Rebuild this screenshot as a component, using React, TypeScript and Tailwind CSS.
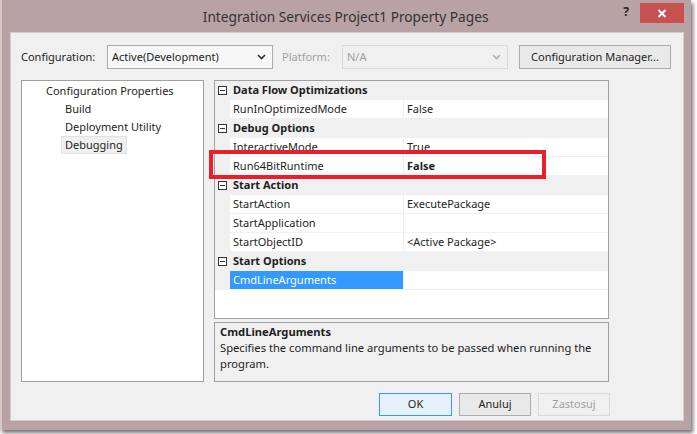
import React from "react";

const font = { fontFamily: '"Noto Sans", "Open Sans", sans-serif' };

function Chevron({ color = "#333" }: { color?: string }) {
  return (
    <svg width="9" height="6" viewBox="0 0 9 6">
      <path d="M1 1 L4.5 4.5 L8 1" fill="none" stroke={color} strokeWidth="1.6" />
    </svg>
  );
}

function MinusBox() {
  return (
    <div className="w-[9px] h-[9px] border border-[#333] flex items-center justify-center bg-white">
      <div className="w-[5px] h-[1px] bg-[#333]" />
    </div>
  );
}

type Row =
  | { kind: "cat"; label: string }
  | { kind: "prop"; name: string; value: string; bold?: boolean; selected?: boolean };

const rows: Row[] = [
  { kind: "cat", label: "Data Flow Optimizations" },
  { kind: "prop", name: "RunInOptimizedMode", value: "False" },
  { kind: "cat", label: "Debug Options" },
  { kind: "prop", name: "InteractiveMode", value: "True" },
  { kind: "prop", name: "Run64BitRuntime", value: "False", bold: true },
  { kind: "cat", label: "Start Action" },
  { kind: "prop", name: "StartAction", value: "ExecutePackage" },
  { kind: "prop", name: "StartApplication", value: "" },
  { kind: "prop", name: "StartObjectID", value: "<Active Package>" },
  { kind: "cat", label: "Start Options" },
  { kind: "prop", name: "CmdLineArguments", value: "", selected: true },
];

export default function App() {
  return (
    <div className="w-[697px] h-[434px] bg-white relative overflow-hidden text-[11px] text-[#1e1e1e]" style={font}>
      {/* window */}
      <div className="w-[691px] h-[430px] bg-[#b9a2a3] border-l-2 border-[#d8c8c6] shadow-[2px_3px_4px_rgba(0,0,0,0.55)] flex flex-col">
        {/* title bar */}
        <div className="h-[32px] flex items-start relative shrink-0">
          <div className="flex-1 text-center text-[13.7px] text-[#333] pt-[7px] pl-[66px]">Integration Services Project1 Property Pages</div>
          <div className="text-[12px] font-bold text-[#222] mt-[3px] mr-[11px]">?</div>
          <div className="w-[44px] h-[20px] bg-[#c75050] mt-[3px] mr-[7px] flex items-center justify-center">
            <svg width="10" height="9" viewBox="0 0 10 9">
              <path d="M1.5 1 L8.5 8 M8.5 1 L1.5 8" stroke="white" strokeWidth="2" />
            </svg>
          </div>
        </div>
        {/* content */}
        <div className="ml-[8px] mr-[7px] h-[389px] bg-[#f0f0f0] border border-[#d6cccb] flex flex-col pl-[10px]">
          {/* config row */}
          <div className="flex items-center h-[24px] mt-[12px]">
            <span className="w-[86px] text-[#1e1e1e]">Configuration:</span>
            <div className="w-[166px] h-[24px] border border-[#acacac] bg-[#f7f7f7] flex items-center pl-[4px] pr-[6px]">
              <span className="flex-1">Active(Development)</span>
              <Chevron />
            </div>
            <span className="ml-[9px] w-[60px] text-[#a0a0a0]">Platform:</span>
            <div className="w-[166px] h-[24px] border border-[#d9d9d9] bg-[#f0f0f0] flex items-center pl-[4px] pr-[6px] text-[#a0a0a0]">
              <span className="flex-1">N/A</span>
              <Chevron color="#b0b0b0" />
            </div>
            <div className="ml-[11px] w-[152px] h-[24px] border border-[#acacac] bg-[#e9e9e9] flex items-center justify-center">
              Configuration Manager...
            </div>
          </div>
          {/* panels */}
          <div className="flex mt-[11px]">
            {/* tree */}
            <div className="w-[183px] h-[302px] bg-white border border-[#a0a0a0] pt-[1px]">
              <div className="pl-[24px] h-[18px] leading-[18px]">Configuration Properties</div>
              <div className="pl-[43px] h-[18px] leading-[18px]">Build</div>
              <div className="pl-[43px] h-[18px] leading-[18px]">Deployment Utility</div>
              <div className="pl-[39px] h-[18px] flex">
                <span className="bg-[#f0f0f0] border border-[#e2e2e2] px-[3px] leading-[16px]">Debugging</span>
              </div>
            </div>
            <div className="ml-[10px] flex flex-col">
              {/* grid */}
              <div className="w-[395px] h-[239px] bg-white border border-[#a0a0a0] flex flex-col">
                {rows.map((r, i) =>
                  r.kind === "cat" ? (
                    <div key={i} className="h-[19px] bg-[#f0f0f0] flex items-center">
                      <div className="w-[15px] flex justify-center">
                        <MinusBox />
                      </div>
                      <span className="font-bold pl-[3px]">{r.label}</span>
                    </div>
                  ) : (
                    <div key={i} className="h-[19px] flex bg-[#f0f0f0]">
                      <div className="w-[15px]" />
                      <div
                        className={
                          r.selected
                            ? "w-[173px] bg-[#3399ff] text-white pl-[3px] leading-[18px] mb-[1px]"
                            : "w-[173px] bg-white pl-[3px] leading-[18px] mb-[1px]"
                        }
                      >
                        {r.name}
                      </div>
                      <div
                        className={
                          r.bold
                            ? "flex-1 bg-white ml-[1px] pl-[3px] leading-[18px] mb-[1px] font-bold"
                            : "flex-1 bg-white ml-[1px] pl-[3px] leading-[18px] mb-[1px]"
                        }
                      >
                        {r.value}
                      </div>
                    </div>
                  )
                )}
              </div>
              {/* description */}
              <div className="w-[395px] h-[60px] mt-[3px] bg-[#f0f0f0] border border-[#a0a0a0] px-[5px] pt-[1px] leading-[16px] text-[11.2px]">
                <div className="font-bold">CmdLineArguments</div>
                <div>Specifies the command line arguments to be passed when running the program.</div>
              </div>
            </div>
          </div>
          {/* buttons */}
          <div className="flex mt-[11px] pl-[358px] gap-[7px]">
            <div className="w-[73px] h-[23px] border border-[#3399ff] bg-[#e5f1fb] flex items-center justify-center">OK</div>
            <div className="w-[72px] h-[23px] border border-[#acacac] bg-[#e9e9e9] flex items-center justify-center">Anuluj</div>
            <div className="w-[72px] h-[23px] border border-[#d9d9d9] bg-[#f0f0f0] text-[#a0a0a0] flex items-center justify-center">Zastosuj</div>
          </div>
        </div>
      </div>
      {/* red highlight */}
      <div className="absolute left-[209px] top-[150px] w-[337px] h-[29px] border-4 border-[#e8202a]" />
    </div>
  );
}
